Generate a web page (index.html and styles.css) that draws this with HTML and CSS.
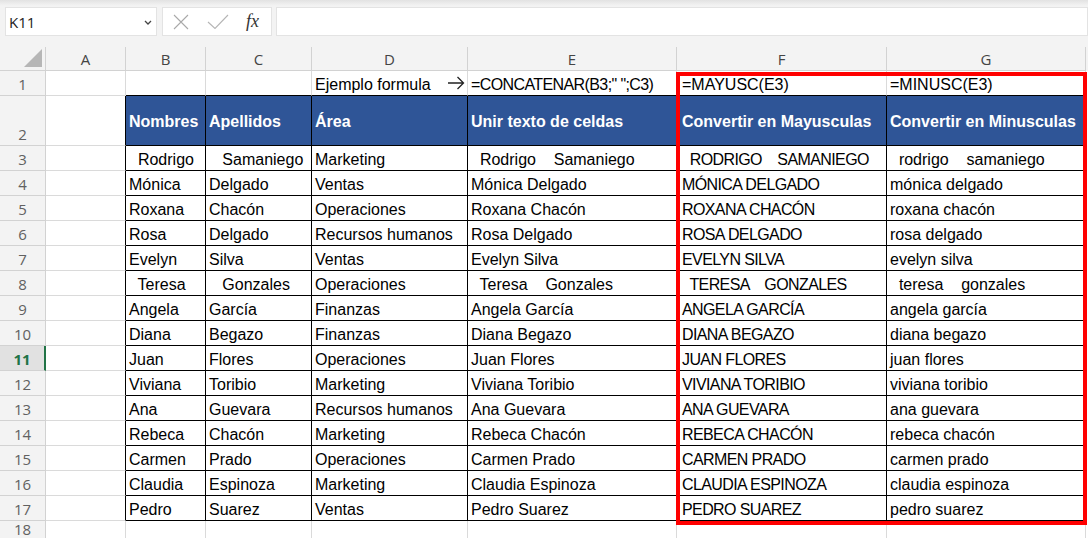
FILE: index.html
```html
<!DOCTYPE html>
<html lang="es">
<head>
  <meta charset="UTF-8">
  <title>MAYUSC y MINUSC</title>
  <link rel="stylesheet" href="styles.css">
</head>
<body>
  <div class="topbar">
    <div class="namebox">
      <span>K11</span>
      <svg class="chev" width="8" height="5" viewBox="0 0 8 5"><path d="M1 1l3 3 3-3" fill="none" stroke="#444" stroke-width="1.3"/></svg>
    </div>
    <div class="fxbox">
      <svg width="16" height="16" viewBox="0 0 16 16"><path d="M1 1l14 14M15 1L1 15" stroke="#a9a9a9" stroke-width="1.1"/></svg>
      <svg width="22" height="15" viewBox="0 0 22 15"><path d="M1 8l7 6.5L21 1" fill="none" stroke="#b5b5b5" stroke-width="1.1"/></svg>
      <span class="fx">fx</span>
    </div>
    <div class="formula"></div>
  </div>

  <div class="sheet">
    <div class="row colhead">
      <div class="corner"><span class="tri"></span></div>
      <div>A</div><div>B</div><div>C</div><div>D</div><div>E</div><div>F</div><div>G</div>
    </div>

    <div class="row r1">
      <div class="rh">1</div><div></div><div></div><div></div>
      <div class="example"><span>Ejemplo formula</span><svg width="18" height="14" viewBox="0 0 18 14"><path d="M1 7h15.5M10.5 1l6 6-6 6" fill="none" stroke="#222" stroke-width="1.3"/></svg></div>
      <div class="up">=CONCATENAR(B3;" ";C3)</div>
      <div>=MAYUSC(E3)</div>
      <div>=MINUSC(E3)</div>
    </div>

    <div class="row hd d">
      <div class="rh">2</div><div></div>
      <div>Nombres</div><div>Apellidos</div><div>Área</div><div>Unir texto de celdas</div><div>Convertir en Mayusculas</div><div>Convertir en Minusculas</div>
    </div>

    <div class="row d"><div class="rh">3</div><div></div><div>  Rodrigo</div><div>   Samaniego</div><div>Marketing</div><div>  Rodrigo    Samaniego</div><div class="up">  RODRIGO    SAMANIEGO</div><div>  rodrigo    samaniego</div></div>
    <div class="row d"><div class="rh">4</div><div></div><div>Mónica</div><div>Delgado</div><div>Ventas</div><div>Mónica Delgado</div><div class="up">MÓNICA DELGADO</div><div>mónica delgado</div></div>
    <div class="row d"><div class="rh">5</div><div></div><div>Roxana</div><div>Chacón</div><div>Operaciones</div><div>Roxana Chacón</div><div class="up">ROXANA CHACÓN</div><div>roxana chacón</div></div>
    <div class="row d"><div class="rh">6</div><div></div><div>Rosa</div><div>Delgado</div><div>Recursos humanos</div><div>Rosa Delgado</div><div class="up">ROSA DELGADO</div><div>rosa delgado</div></div>
    <div class="row d"><div class="rh">7</div><div></div><div>Evelyn</div><div>Silva</div><div>Ventas</div><div>Evelyn Silva</div><div class="up">EVELYN SILVA</div><div>evelyn silva</div></div>
    <div class="row d"><div class="rh">8</div><div></div><div>  Teresa</div><div>   Gonzales</div><div>Operaciones</div><div>  Teresa    Gonzales</div><div class="up">  TERESA    GONZALES</div><div>  teresa    gonzales</div></div>
    <div class="row d"><div class="rh">9</div><div></div><div>Angela</div><div>García</div><div>Finanzas</div><div>Angela García</div><div class="up">ANGELA GARCÍA</div><div>angela garcía</div></div>
    <div class="row d"><div class="rh">10</div><div></div><div>Diana</div><div>Begazo</div><div>Finanzas</div><div>Diana Begazo</div><div class="up">DIANA BEGAZO</div><div>diana begazo</div></div>
    <div class="row d"><div class="rh sel">11</div><div></div><div>Juan</div><div>Flores</div><div>Operaciones</div><div>Juan Flores</div><div class="up">JUAN FLORES</div><div>juan flores</div></div>
    <div class="row d"><div class="rh">12</div><div></div><div>Viviana</div><div>Toribio</div><div>Marketing</div><div>Viviana Toribio</div><div class="up">VIVIANA TORIBIO</div><div>viviana toribio</div></div>
    <div class="row d"><div class="rh">13</div><div></div><div>Ana</div><div>Guevara</div><div>Recursos humanos</div><div>Ana Guevara</div><div class="up">ANA GUEVARA</div><div>ana guevara</div></div>
    <div class="row d"><div class="rh">14</div><div></div><div>Rebeca</div><div>Chacón</div><div>Marketing</div><div>Rebeca Chacón</div><div class="up">REBECA CHACÓN</div><div>rebeca chacón</div></div>
    <div class="row d"><div class="rh">15</div><div></div><div>Carmen</div><div>Prado</div><div>Operaciones</div><div>Carmen Prado</div><div class="up">CARMEN PRADO</div><div>carmen prado</div></div>
    <div class="row d"><div class="rh">16</div><div></div><div>Claudia</div><div>Espinoza</div><div>Marketing</div><div>Claudia Espinoza</div><div class="up">CLAUDIA ESPINOZA</div><div>claudia espinoza</div></div>
    <div class="row d"><div class="rh">17</div><div></div><div>Pedro</div><div>Suarez</div><div>Ventas</div><div>Pedro Suarez</div><div class="up">PEDRO SUAREZ</div><div>pedro suarez</div></div>

    <div class="row last"><div class="rh">18</div><div></div><div></div><div></div><div></div><div></div><div></div><div></div></div>

    <div class="redbox"></div>
  </div>
</body>
</html>
```

FILE: styles.css
```css
body {
  margin: 0;
  background: #fff;
  font-family: 'Liberation Sans', Arial, sans-serif;
  font-size: 16px;
  color: #000;
  overflow: hidden;
}

/* barra de formulas */
.topbar {
  display: flex;
  gap: 5px;
  height: 47px;
  box-sizing: border-box;
  padding: 7px 0 11px 5px;
  background: linear-gradient(#e2e2e2 0, #eeeeee 4px, #f3f3f3 6px);
}
.namebox, .fxbox, .formula {
  background: #fff;
  border: 1px solid #e3e3e3;
  box-sizing: border-box;
  height: 29px;
}
.namebox {
  width: 152px;
  display: flex;
  align-items: center;
  justify-content: space-between;
  padding: 0 4px 0 3px;
  font-family: 'Open Sans', sans-serif;
  font-size: 15px;
  color: #222;
}
.chev {
  margin-top: 1px;
}
.fxbox {
  width: 110px;
  display: flex;
  align-items: center;
  padding-left: 10px;
}
.fxbox svg + svg {
  margin-left: 18px;
}
.fx {
  margin-left: 17px;
  font-family: 'Liberation Serif', serif;
  font-style: italic;
  font-size: 18px;
  color: #333;
}
.formula {
  flex: 1;
  margin-left: -1px;
}

/* hoja */
.sheet {
  position: relative;
}
.row {
  display: grid;
  grid-template-columns: 46px 80px 80px 106px 156px 209px 210px 199px;
  height: 25px;
}
.row > div {
  box-sizing: border-box;
  border-right: 1px solid #dadada;
  border-bottom: 1px solid #dadada;
  padding: 0 2px 1px 3px;
  display: flex;
  align-items: flex-end;
  white-space: pre;
  overflow: hidden;
}
.row > div:nth-child(7) {
  padding-left: 5px;
}
.colhead {
  height: 24px;
  background: #f3f3f3;
}
.colhead > div {
  align-items: center;
  justify-content: center;
  padding: 0;
  font-family: 'Open Sans', sans-serif;
  font-size: 15px;
  color: #444;
  border-color: #d2d2d2;
}
.colhead > div:nth-child(7) {
  padding-left: 0;
}
.corner {
  position: relative;
}
.tri {
  position: absolute;
  right: 3px;
  bottom: 3px;
  width: 18px;
  height: 18px;
  background: #b6b6b6;
  clip-path: polygon(100% 0, 100% 100%, 0 100%);
}
.row > .rh {
  background: #f3f3f3;
  justify-content: center;
  padding: 0 0 2px;
  font-family: 'Open Sans', sans-serif;
  font-size: 15px;
  line-height: 18px;
  color: #616161;
  border-color: #d2d2d2;
}
.last > .rh {
  padding-bottom: 7px;
}
.row > .rh.sel {
  background: #e1e1e1;
  color: #217346;
  font-weight: bold;
  border-right: 2px solid #217346;
}

.r1 > div:nth-child(n+3) {
  border-bottom-color: #000;
}
.example {
  justify-content: space-between;
}
.example svg {
  margin-bottom: 4px;
}

.d > div:nth-child(2) {
  border-right-color: #000;
}
.d > div:nth-child(n+3) {
  border-right-color: #000;
  border-bottom-color: #000;
}
.hd {
  height: 50px;
}
.hd > div:nth-child(n+3) {
  background: #2f5597;
  color: #fff;
  font-weight: bold;
  align-items: center;
  padding-top: 3px;
}
.up {
  letter-spacing: -0.6px;
}

.redbox {
  position: absolute;
  left: 676px;
  top: 25px;
  width: 411px;
  height: 453px;
  box-sizing: border-box;
  border: 4px solid #ff0000;
}
```
